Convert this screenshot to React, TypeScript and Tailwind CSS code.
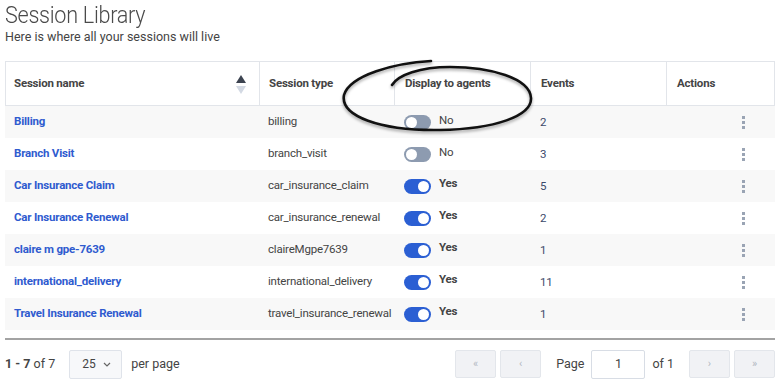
import React from "react";

type Row = { name: string; type: string; on: boolean; events: string };

const rows: Row[] = [
  { name: "Billing", type: "billing", on: false, events: "2" },
  { name: "Branch Visit", type: "branch_visit", on: false, events: "3" },
  { name: "Car Insurance Claim", type: "car_insurance_claim", on: true, events: "5" },
  { name: "Car Insurance Renewal", type: "car_insurance_renewal", on: true, events: "2" },
  { name: "claire m gpe-7639", type: "claireMgpe7639", on: true, events: "1" },
  { name: "international_delivery", type: "international_delivery", on: true, events: "11" },
  { name: "Travel Insurance Renewal", type: "travel_insurance_renewal", on: true, events: "1" },
];

function Toggle({ on }: { on: boolean }) {
  return (
    <div className="flex items-center gap-2">
      <span
        className={
          on
            ? "w-[27px] h-[15px] rounded-full bg-[#2b5fd3] flex items-center justify-end px-[2px]"
            : "w-[27px] h-[15px] rounded-full bg-[#8d9bb0] flex items-center justify-start px-[2px]"
        }
      >
        <span className="w-[11px] h-[11px] rounded-full bg-white" />
      </span>
      <span
        className={
          on
            ? "font-bold text-[#444] -translate-y-[2px]"
            : "text-[#444] -translate-y-[1px]"
        }
      >
        {on ? "Yes" : "No"}
      </span>
    </div>
  );
}

function Kebab() {
  return (
    <div className="flex flex-col gap-[2px] items-center w-[3px]">
      <span className="w-[3px] h-[3px] bg-[#9aa4b4]" />
      <span className="w-[3px] h-[3px] bg-[#9aa4b4]" />
      <span className="w-[3px] h-[3px] bg-[#9aa4b4]" />
    </div>
  );
}

function PagerBtn({ label }: { label: string }) {
  return (
    <button className="w-[41px] h-[28px] bg-[#f1f2f5] border border-[#e3e6eb] rounded-[2px] text-[11px] text-[#b3b8c2] flex items-center justify-center">
      {label}
    </button>
  );
}

export default function App() {
  return (
    <div className="relative w-[780px] h-[384px] bg-white font-['Roboto',sans-serif] text-[#444] overflow-hidden">
      <div className="px-[5px]">
        <h1 className="text-[24px] leading-[30px] font-light text-[#4a4a4a] tracking-[-0.3px] scale-x-[0.9] origin-left">
          Session Library
        </h1>
        <p className="text-[12.5px] leading-[14px] text-[#444]">
          Here is where all your sessions will live
        </p>

        <div className="mt-[17px] text-[11.5px] tracking-[-0.2px]">
          <div className="flex h-[45px] border border-[#e2e5ea] font-bold text-[#444]">
            <div className="w-[253px] flex items-center justify-between pl-[8px] pr-[13px]">
              <span>Session name</span>
              <div className="flex flex-col items-center gap-[3px] mt-[2px]">
                <svg width="10" height="8" viewBox="0 0 10 8">
                  <path d="M5 0 L10 8 L0 8 Z" fill="#3c4350" />
                </svg>
                <svg width="10" height="8" viewBox="0 0 10 8">
                  <path d="M0 0 L10 0 L5 8 Z" fill="#d3d9e3" />
                </svg>
              </div>
            </div>
            <div className="w-[135px] border-l border-[#e2e5ea] flex items-center pl-[9px]">
              Session type
            </div>
            <div className="w-[136px] border-l border-[#e2e5ea] flex items-center pl-[10px]">
              Display to agents
            </div>
            <div className="w-[136px] border-l border-[#e2e5ea] flex items-center pl-[10px]">
              Events
            </div>
            <div className="flex-1 border-l border-[#e2e5ea] flex items-center pl-[10px]">
              Actions
            </div>
          </div>

          {rows.map((r, i) => (
            <div
              key={r.name}
              className={
                i % 2 === 0
                  ? "flex h-[32px] items-center bg-[#f8f8f8]"
                  : "flex h-[32px] items-center bg-white"
              }
            >
              <div className="w-[254px] pl-[9px] font-bold text-[#2f5bcf]">{r.name}</div>
              <div className="w-[135px] pl-[9px] text-[#444]">{r.type}</div>
              <div className="w-[136px] pl-[10px]">
                <Toggle on={r.on} />
              </div>
              <div className="w-[136px] pl-[10px] text-[#3b4a6b] translate-y-[1px]">{r.events}</div>
              <div className="flex-1 flex justify-end pr-[30px]">
                <Kebab />
              </div>
            </div>
          ))}
        </div>

        <div className="mt-[8px] h-[2px] bg-[#a3a3a3]" />

        <div className="flex items-center justify-between mt-[9px] h-[30px]">
          <div className="flex items-center text-[12.5px] text-[#444]">
            <span>
              <span className="font-bold">1 - 7</span> of 7
            </span>
            <div className="ml-[14px] w-[53px] h-[29px] border border-[#dfe3ea] bg-[#f7f8fa] rounded-[2px] flex items-center justify-between pl-[12px] pr-[10px] text-[12px]">
              <span>25</span>
              <svg width="8" height="5" viewBox="0 0 8 5">
                <path d="M1 1 L4 4 L7 1" stroke="#666" strokeWidth="1.2" fill="none" />
              </svg>
            </div>
            <span className="ml-[9px]">per page</span>
          </div>

          <div className="flex items-center text-[12.5px] text-[#444]">
            <PagerBtn label="«" />
            <div className="ml-[4px]">
              <PagerBtn label="‹" />
            </div>
            <span className="ml-[15px]">Page</span>
            <div className="ml-[7px] w-[54px] h-[29px] bg-white border border-[#d8dde5] rounded-[2px] flex items-center justify-center">
              1
            </div>
            <span className="ml-[7px]">of 1</span>
            <div className="ml-[15px]">
              <PagerBtn label="›" />
            </div>
            <div className="ml-[4px]">
              <PagerBtn label="»" />
            </div>
          </div>
        </div>
      </div>

      <svg
        className="absolute inset-0 pointer-events-none drop-shadow-[0_2px_1.5px_rgba(0,0,0,0.35)]"
        width="780"
        height="384"
        viewBox="0 0 780 384"
      >
        <path
          d="M431 61 C 395 63, 350 75, 344 95 C 340 116, 380 131, 440 130 C 495 129, 532 116, 531 98 C 530 78, 490 67, 450 67 C 420 67, 398 75, 392 85"
          stroke="#111"
          strokeWidth="2.6"
          fill="none"
          strokeLinecap="round"
        />
      </svg>
    </div>
  );
}
